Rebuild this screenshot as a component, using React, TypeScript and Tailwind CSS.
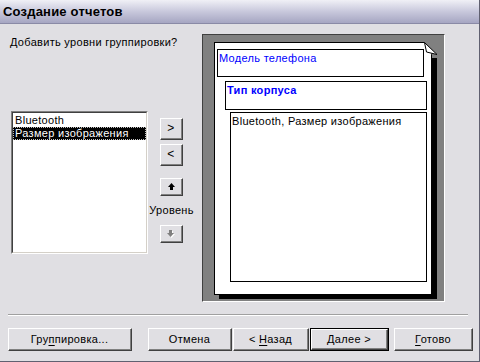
import React from "react";

function Raised({
  children,
  className = "",
  isDefault = false,
}: {
  children?: React.ReactNode;
  className?: string;
  isDefault?: boolean;
}) {
  const inner = (
    <div className="h-full w-full border-t border-l border-t-white border-l-white border-r border-b border-r-[#404040] border-b-[#404040]">
      <div className="h-full w-full flex items-center justify-center border-r border-b border-r-[#808080] border-b-[#808080]">
        {children}
      </div>
    </div>
  );
  if (isDefault) {
    return <div className={`border border-black shrink-0 ${className}`}>{inner}</div>;
  }
  return <div className={`shrink-0 ${className}`}>{inner}</div>;
}

function UpArrow() {
  return (
    <svg width="7" height="7" viewBox="0 0 7 7">
      <polygon points="3.5,0 7,4 0,4" fill="#000" />
      <rect x="2" y="4" width="3" height="3" fill="#000" />
    </svg>
  );
}

function DownArrowDisabled() {
  return (
    <svg width="8" height="8" viewBox="0 0 8 8">
      <rect x="3" y="1" width="3" height="3" fill="#fff" />
      <polygon points="1,4 8,4 4.5,8" fill="#fff" />
      <rect x="2" y="0" width="3" height="3" fill="#808080" />
      <polygon points="0,3 7,3 3.5,7" fill="#808080" />
    </svg>
  );
}

function U({ children }: { children: React.ReactNode }) {
  return <span className="underline underline-offset-[2px]">{children}</span>;
}

export default function App() {
  return (
    <div className="w-[480px] h-[362px] bg-[#e0dfe3] flex flex-col font-['Liberation_Sans',Arial,sans-serif] text-[11px] leading-[13px] tracking-[0.3px] text-black border-r border-b border-r-[#606070] border-b-[#606070] overflow-hidden">
      <div className="h-[24px] shrink-0 bg-linear-to-b from-[#f0f0f6] via-[#c8c8dc] to-[#a6a6c2] border-b border-b-[#8a8aa6] flex items-center pl-[3px]">
        <span className="font-bold text-[13px] leading-[14px] tracking-[0.2px]">Создание отчетов</span>
      </div>

      <div className="flex shrink-0">
        <div className="w-[202px] shrink-0 flex flex-col">
          <div className="pl-[10px] pt-[12px]">Добавить уровни группировки?</div>
          <div className="flex mt-[62px] ml-[11px] gap-[12px]">
            <div className="w-[137px] h-[143px] bg-white border-t border-l border-t-[#808080] border-l-[#808080] border-r border-b border-r-white border-b-white">
              <div className="h-full w-full border-t border-l border-t-[#404040] border-l-[#404040] border-r border-b border-r-[#d4d0c8] border-b-[#d4d0c8] pt-[1px]">
                <div className="h-[13px] pl-[2px] flex items-center">Bluetooth</div>
                <div className="h-[13px] bg-black text-white border border-dotted border-[#c0c0c0] pl-[1px] flex items-center">
                  Размер изображения
                </div>
              </div>
            </div>
            <div className="w-[23px] flex flex-col items-center pt-[7px]">
              <Raised className="w-[23px] h-[22px]">
                <span className="text-[12px]">&gt;</span>
              </Raised>
              <Raised className="w-[23px] h-[22px] mt-[4px]">
                <span className="text-[12px]">&lt;</span>
              </Raised>
              <Raised className="w-[23px] h-[18px] mt-[12px]">
                <UpArrow />
              </Raised>
              <div className="mt-[8px] whitespace-nowrap">Уровень</div>
              <Raised className="w-[23px] h-[18px] mt-[8px]">
                <DownArrowDisabled />
              </Raised>
            </div>
          </div>
        </div>

        <div className="w-[243px] h-[268px] mt-[10px] shrink-0 bg-[#808080] border-t border-l border-t-[#404040] border-l-[#404040] border-r border-b border-r-white border-b-white pl-[11px] pt-[7px]">
          <div className="relative w-[218px] h-[253px] bg-white border border-black shadow-[5px_4px_0_#000]">
            <svg
              className="absolute -top-[1px] -right-[7px]"
              width="19"
              height="16"
              viewBox="0 0 19 16"
            >
              <polygon points="5,0 19,0 19,16 13,16 13,13" fill="#808080" />
              <polygon points="5.5,0.5 7.5,10 18,12.5" fill="#fff" stroke="#000" strokeWidth="1" />
            </svg>
            <div className="flex flex-col">
              <div className="ml-[2px] mt-[6px] w-[207px] h-[28px] border border-black text-[#0000ff] pl-[1px] pt-[2px]">
                Модель телефона
              </div>
              <div className="ml-[10px] mt-[4px] w-[202px] h-[29px] border border-black text-[#0000ff] font-bold pl-[1px] pt-[2px]">
                Тип корпуса
              </div>
              <div className="ml-[15px] mt-[2px] w-[197px] h-[170px] border border-black pl-[1px] pt-[2px]">
                Bluetooth, Размер изображения
              </div>
            </div>
          </div>
        </div>
      </div>

      <div className="mt-[12px] ml-[8px] w-[460px] border-t border-t-[#a0a0a0] border-b border-b-white shrink-0" />

      <div className="flex mt-[12px] pl-[8px] h-[23px] shrink-0">
        <Raised className="w-[124px] h-[23px]">
          <span>
            Гру<U>п</U>пировка...
          </span>
        </Raised>
        <Raised className="w-[84px] h-[23px] ml-[16px]">
          <span>Отмена</span>
        </Raised>
        <Raised className="w-[76px] h-[23px] ml-[1px]">
          <span>
            &lt; <U>Н</U>азад
          </span>
        </Raised>
        <Raised className="w-[79px] h-[23px] ml-[1px]" isDefault>
          <span>
            <U>Д</U>алее &gt;
          </span>
        </Raised>
        <Raised className="w-[79px] h-[23px] ml-[5px]">
          <span>
            <U>Г</U>отово
          </span>
        </Raised>
      </div>
    </div>
  );
}
